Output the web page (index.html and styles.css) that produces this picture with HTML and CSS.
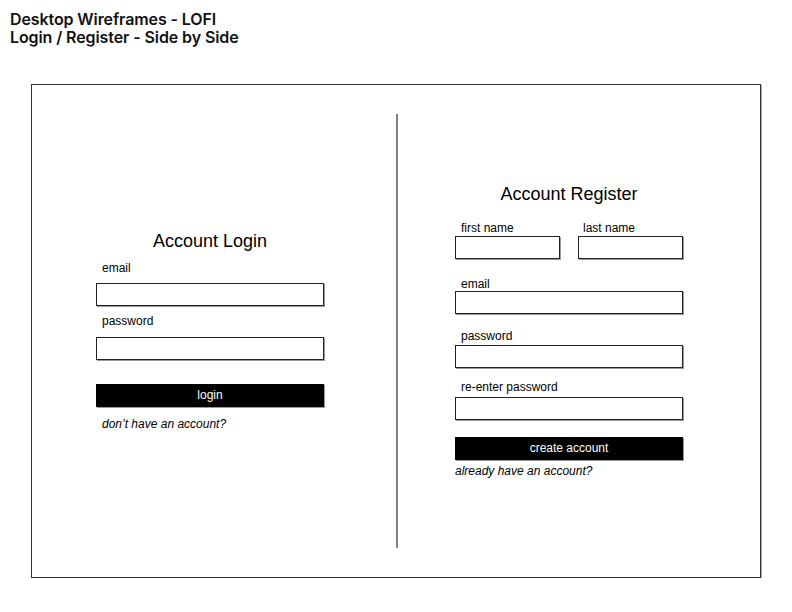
FILE: index.html
```html
<!DOCTYPE html>
<html lang="en">
<head>
  <meta charset="UTF-8" />
  <meta name="viewport" content="width=device-width, initial-scale=1.0" />
  <title>Login / Register - Side by Side</title>
  <link rel="stylesheet" href="styles.css">
</head>
<body>
  <h1 class="page-title">Desktop Wireframes - LOFI<br>Login / Register - Side by Side</h1>

  <div class="frame">
    <section class="panel login">
      <form class="form">
        <h2 class="form-title">Account Login</h2>
        <label class="field-label login-email-label">email</label>
        <input class="field login-email" type="text" />
        <label class="field-label login-pass-label">password</label>
        <input class="field login-pass" type="password" />
        <button class="btn login-btn" type="button">login</button>
        <p class="alt-link login-alt">don’t have an account?</p>
      </form>
    </section>

    <div class="divider"></div>

    <section class="panel register">
      <form class="form">
        <h2 class="form-title">Account Register</h2>
        <div class="name-row">
          <div>
            <label class="field-label">first name</label>
            <input class="field" type="text" />
          </div>
          <div>
            <label class="field-label last">last name</label>
            <input class="field" type="text" />
          </div>
        </div>
        <label class="field-label reg-email-label">email</label>
        <input class="field reg-email" type="text" />
        <label class="field-label reg-pass-label">password</label>
        <input class="field reg-pass" type="password" />
        <label class="field-label reg-repass-label">re-enter password</label>
        <input class="field reg-repass" type="password" />
        <button class="btn reg-btn" type="button">create account</button>
        <p class="alt-link reg-alt">already have an account?</p>
      </form>
    </section>
  </div>
</body>
</html>
```

FILE: styles.css
```css
html, body {
  margin: 0;
  padding: 0;
  background: #fff;
  color: #000;
  font-family: "Liberation Sans", Arial, sans-serif;
}

.page-title {
  margin: 0;
  padding: 10px 0 0 10px;
  font-family: Inter, "Liberation Sans", sans-serif;
  font-weight: 600;
  font-size: 16px;
  line-height: 18px;
  letter-spacing: -0.1px;
  color: #111;
}

.frame {
  margin: 38px 0 0 31px;
  width: 730px;
  height: 494px;
  box-sizing: border-box;
  border: 1px solid #333;
  box-shadow: 1px 1px 0 #aaa;
  display: grid;
  grid-template-columns: 364px 2px 1fr;
}

.divider {
  background: #808080;
  margin: 29px 0;
}

.panel {
  display: flex;
  flex-direction: column;
  justify-content: center;
}

.login {
  padding-left: 64px;
}

.register {
  padding-left: 57px;
}

.form {
  width: 228px;
  margin: 0;
}

.form-title {
  margin: 0;
  font-size: 18px;
  font-weight: normal;
  line-height: 21px;
  text-align: center;
}

.field-label {
  display: block;
  padding-left: 6px;
  font-size: 12px;
  line-height: 14px;
}

.field {
  display: block;
  box-sizing: border-box;
  width: 100%;
  height: 23px;
  margin: 0;
  padding: 0 4px;
  border: 1px solid #222;
  border-radius: 0;
  box-shadow: 1px 1px 0 #999;
  background: #fff;
  outline: none;
}

.btn {
  display: block;
  width: 100%;
  height: 23px;
  margin: 0;
  padding: 0;
  border: 0;
  border-radius: 0;
  background: #000;
  color: #fff;
  font-family: "Liberation Sans", Arial, sans-serif;
  font-size: 12px;
  line-height: 23px;
  box-shadow: 1px 1px 0 #999;
}

.alt-link {
  margin: 0;
  font-size: 12px;
  line-height: 14px;
  font-style: italic;
}

/* login spacing */
.login-email-label { margin-top: 9px; }
.login-email { margin-top: 8px; }
.login-pass-label { margin-top: 8px; }
.login-pass { margin-top: 9px; }
.login-btn { margin-top: 24px; }
.login-alt { margin-top: 10px; padding-left: 6px; }

/* register spacing */
.name-row {
  display: grid;
  grid-template-columns: 105px 105px;
  column-gap: 18px;
  margin-top: 16px;
}

.name-row .field {
  margin-top: 1px;
}

.name-row .last {
  padding-left: 5px;
}

.reg-email-label { margin-top: 18px; }
.reg-pass-label { margin-top: 15px; }
.reg-pass { margin-top: 2px; }
.reg-repass-label { margin-top: 12px; }
.reg-repass { margin-top: 3px; }
.reg-btn { margin-top: 17px; }
.reg-alt { margin-top: 4px; }
```
